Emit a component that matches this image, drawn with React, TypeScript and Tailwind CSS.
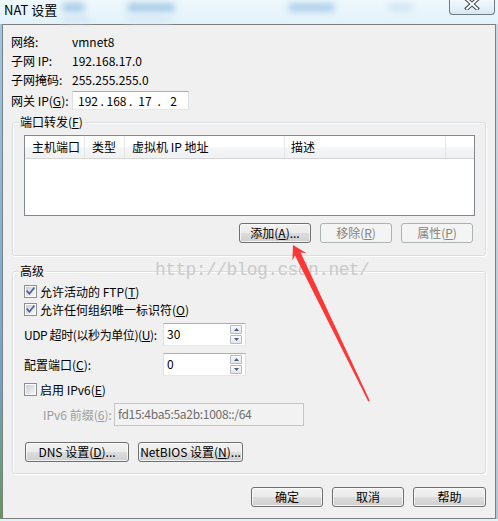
import React from "react";

const U = ({ c }: { c: string }) => (
  <span className="underline underline-offset-[1px] decoration-[1px]">{c}</span>
);

function Btn({
  children,
  w,
  disabled,
}: {
  children: React.ReactNode;
  w: string;
  disabled?: boolean;
}) {
  return (
    <div
      className={
        w +
        " h-[20px] shrink-0 flex items-center justify-center rounded-[3px] border leading-[14px] whitespace-nowrap " +
        (disabled
          ? "border-[#adb2b5] bg-[#f4f4f4] text-[#838383]"
          : "border-[#707070] bg-[linear-gradient(#f2f2f2_0%,#ebebeb_50%,#dddddd_50%,#cfcfcf_100%)] shadow-[inset_0_0_0_1px_rgba(255,255,255,0.7)] text-black")
      }
    >
      {children}
    </div>
  );
}

function CheckBox({ checked }: { checked?: boolean }) {
  return (
    <svg width="13" height="13" viewBox="0 0 13 13" className="shrink-0">
      <defs>
        <linearGradient id={checked ? "cbg1" : "cbg0"} x1="0" y1="0" x2="1" y2="1">
          <stop offset="0" stopColor="#cbcfd5" />
          <stop offset="1" stopColor="#f6f6f6" />
        </linearGradient>
      </defs>
      <rect x="0.5" y="0.5" width="12" height="12" fill="#ffffff" stroke="#8e8f8f" />
      <rect x="2" y="2" width="9" height="9" fill={checked ? "url(#cbg1)" : "url(#cbg0)"} />
      {checked && (
        <path
          d="M3.2 6.3 L5.4 8.8 L9.9 3.2"
          fill="none"
          stroke="#4a5f97"
          strokeWidth="1.7"
          strokeLinecap="square"
        />
      )}
    </svg>
  );
}

function SpinBtn({ up }: { up?: boolean }) {
  return (
    <div className="h-[9px] w-[12px] flex items-center justify-center rounded-[1px] border border-[#b5bcc7] bg-[linear-gradient(#fbfbfb,#e3e5e8)]">
      <svg width="5" height="3" viewBox="0 0 5 3">
        {up ? (
          <path d="M0 3 L2.5 0 L5 3 Z" fill="#4b5e82" />
        ) : (
          <path d="M0 0 L5 0 L2.5 3 Z" fill="#4b5e82" />
        )}
      </svg>
    </div>
  );
}

function SpinInput({ value }: { value: string }) {
  return (
    <div className="w-[83px] h-[23px] shrink-0 bg-white border border-[#abadb3] border-x-[#dbdfe6] border-b-[#e3e9ef] flex items-center">
      <span className="flex-1 pl-[3px] leading-[16px] -mt-[2px]">{value}</span>
      <div className="flex flex-col gap-[1px] mr-[3px]">
        <SpinBtn up />
        <SpinBtn />
      </div>
    </div>
  );
}

function Group({
  title,
  className,
  children,
}: {
  title: React.ReactNode;
  className: string;
  children: React.ReactNode;
}) {
  return (
    <div
      className={
        className +
        " ml-[9px] w-[474px] border border-[#d5dfe5] rounded-[3px] shadow-[inset_1px_1px_0_#ffffff,1px_1px_0_#ffffff]"
      }
    >
      <div className="-mt-[8px] ml-[6px] px-[1px] w-fit bg-[#f0f0f0] leading-[14px]">{title}</div>
      {children}
    </div>
  );
}

function InfoRow({ label, value }: { label: string; value: string }) {
  return (
    <div className="flex h-[19px] items-center">
      <div className="w-[61px] whitespace-nowrap">{label}</div>
      <div>{value}</div>
    </div>
  );
}

export default function App() {
  return (
    <div className="relative w-[498px] h-[521px] overflow-hidden bg-[#e0f3f7] flex flex-col text-[12px] leading-[16px] text-black font-['Noto_Sans_CJK_SC',sans-serif]">
      {/* Title bar */}
      <div className="h-[24px] shrink-0 flex items-start bg-[linear-gradient(180deg,#eef8fd,#e3f2fa)]">
        <div className="w-[62px] pl-[4px] pt-[2px] text-[13px] leading-[16px] whitespace-nowrap">NAT 设置</div>
        <div className="flex flex-col gap-[5px] mt-[3px]">
          <div className="w-[23px] h-[9px] rounded-full bg-[#a9cbe6] blur-[3px]" />
          <div className="w-[28px] h-[5px] rounded-full bg-[#cfe3f2] blur-[3px]" />
        </div>
        <div className="ml-[37px] flex flex-col gap-[5px] mt-[3px]">
          <div className="w-[48px] h-[9px] rounded-full bg-[#a9cbe6] blur-[3px]" />
          <div className="w-[44px] h-[5px] rounded-full bg-[#d3e6f4] blur-[3px]" />
        </div>
        <div className="ml-[113px] mt-[3px] w-[47px] h-[9px] rounded-full bg-[#b0d0ea] blur-[3px]" />
        <div className="ml-[53px] mt-[4px] w-[25px] h-[7px] rounded-full bg-[#cfe3f3] blur-[3px]" />
        <div className="ml-auto mr-[3px] w-[46px] h-[15px] rounded-b-[4px] border border-t-0 border-[#6f7a87] bg-[linear-gradient(#f3f9fd,#d7e9f6)] flex justify-center">
          <svg width="16" height="11" viewBox="0 0 16 11" className="-mt-[1px]">
            <path d="M3 0.5 L13 9.5 M13 0.5 L3 9.5" stroke="#3e4650" strokeWidth="4" strokeLinecap="square" />
            <path d="M3 0.5 L13 9.5 M13 0.5 L3 9.5" stroke="#ffffff" strokeWidth="2" strokeLinecap="square" />
          </svg>
        </div>
      </div>

      {/* Body */}
      <div className="flex shrink-0">
        <div className="w-[2px] h-[495px] bg-[linear-gradient(#9cc8e6,#6ea6cf_70%,#5d9b5a)]" />
        <div className="w-[494px] h-[495px] border border-[#7f7f7f] bg-[#f0f0f0] flex flex-col">
          <div className="pl-[8px] pt-[7px]">
            <InfoRow label="网络:" value="vmnet8" />
            <InfoRow label="子网 IP:" value="192.168.17.0" />
            <InfoRow label="子网掩码:" value="255.255.255.0" />
            <div className="flex h-[19px] items-center mt-[2px]">
              <div className="w-[61px] whitespace-nowrap">
                网关 IP(<U c="G" />):
              </div>
              <div className="w-[117px] h-[19px] bg-white border border-[#abadb3] border-x-[#dbdfe6] border-b-[#e3e9ef] flex items-center pl-[4px]">
                <span className="w-[22px] text-center">192</span>
                <span className="w-[6.5px] text-center">.</span>
                <span className="w-[22px] text-center">168</span>
                <span className="w-[6.5px] text-center">.</span>
                <span className="w-[22px] text-center">17</span>
                <span className="w-[6.5px] text-center">.</span>
                <span className="w-[22px] text-center">2</span>
              </div>
            </div>
          </div>

          <Group
            className="mt-[12px]"
            title={
              <>
                端口转发(<U c="F" />)
              </>
            }
          >
            <div className="mt-[6px] ml-[11px] w-[451px] h-[81px] border border-[#828790] bg-white">
              <div className="flex h-[23px] border-b border-[#d5d5d5] bg-[linear-gradient(#ffffff_0%,#ffffff_45%,#f4f5f6_55%,#f0f1f3_100%)]">
                <div className="w-[60px] pl-[7px] flex items-center border-r border-[#e3e5e8] whitespace-nowrap">主机端口</div>
                <div className="w-[40px] pl-[7px] flex items-center border-r border-[#e3e5e8] whitespace-nowrap">类型</div>
                <div className="w-[160px] pl-[7px] flex items-center border-r border-[#e3e5e8] whitespace-nowrap">虚拟机 IP 地址</div>
                <div className="w-[161px] pl-[6px] flex items-center border-r border-[#e3e5e8]">描述</div>
                <div className="flex-1" />
              </div>
            </div>
            <div className="mt-[7px] mb-[12px] pr-[12px] flex justify-end gap-[9px]">
              <Btn w="w-[72px]">
                添加(<U c="A" />)...
              </Btn>
              <Btn w="w-[72px]" disabled>
                移除(<U c="R" />)
              </Btn>
              <Btn w="w-[72px]" disabled>
                属性(<U c="P" />)
              </Btn>
            </div>
          </Group>

          <Group className="mt-[15px]" title="高级">
            <div className="pl-[11px] mb-[11px]">
              <div className="mt-[5px] h-[17px] flex items-center gap-[3px]">
                <CheckBox checked />
                <span className="whitespace-nowrap">
                  允许活动的 FTP(<U c="T" />)
                </span>
              </div>
              <div className="mt-[1px] h-[17px] flex items-center gap-[3px]">
                <CheckBox checked />
                <span className="whitespace-nowrap">
                  允许任何组织唯一标识符(<U c="O" />)
                </span>
              </div>
              <div className="mt-[5px] h-[23px] flex items-center">
                <div className="w-[139px] whitespace-nowrap tracking-[-0.4px]">
                  UDP 超时(以秒为单位)(<U c="U" />):
                </div>
                <SpinInput value="30" />
              </div>
              <div className="mt-[7px] h-[23px] flex items-center">
                <div className="w-[139px] whitespace-nowrap">
                  配置端口(<U c="C" />):
                </div>
                <SpinInput value="0" />
              </div>
              <div className="mt-[5px] h-[17px] flex items-center gap-[3px]">
                <CheckBox />
                <span className="whitespace-nowrap">
                  启用 IPv6(<U c="E" />)
                </span>
              </div>
              <div className="mt-[5px] h-[23px] flex items-center">
                <div className="w-[90px] pl-[19px] text-[#9d9d9d] whitespace-nowrap">
                  IPv6 前缀(<U c="6" />):
                </div>
                <div className="w-[190px] h-[23px] border border-[#c4c6c9] bg-[#f2f2f2] flex items-center pl-[3px] text-[#6d6d6d]">
                  <span className="-mt-[2px] tracking-[-0.3px] whitespace-nowrap">fd15:4ba5:5a2b:1008::/64</span>
                </div>
              </div>
              <div className="mt-[16px] ml-[1px] flex gap-[9px]">
                <Btn w="w-[104px]">
                  DNS 设置(<U c="D" />)...
                </Btn>
                <Btn w="w-[105px]">
                  NetBIOS 设置(<U c="N" />)...
                </Btn>
              </div>
            </div>
          </Group>

          <div className="mt-[13px] pr-[9px] flex justify-end gap-[9px]">
            <Btn w="w-[72px]">确定</Btn>
            <Btn w="w-[72px]">取消</Btn>
            <Btn w="w-[73px]">帮助</Btn>
          </div>
        </div>
        <div className="w-[2px] h-[495px] bg-[linear-gradient(#c9d8e3,#b4c6d4)]" />
      </div>

      {/* Watermark */}
      <div className="absolute left-[155px] top-[261px] text-[18px] leading-[18px] tracking-[-0.6px] font-['Liberation_Mono',monospace] text-[#cacaca] pointer-events-none whitespace-nowrap">
        http://blog.csdn.net/
      </div>

      {/* Red annotation arrow */}
      <svg
        className="absolute left-0 top-0 pointer-events-none"
        width="498"
        height="521"
        viewBox="0 0 498 521"
      >
        <polygon
          points="293,245 306.5,253.2 300.6,252.6 369.7,400.6 368.3,401.4 295.0,255.4 292.4,260.5"
          fill="#ff3636"
        />
      </svg>
    </div>
  );
}
